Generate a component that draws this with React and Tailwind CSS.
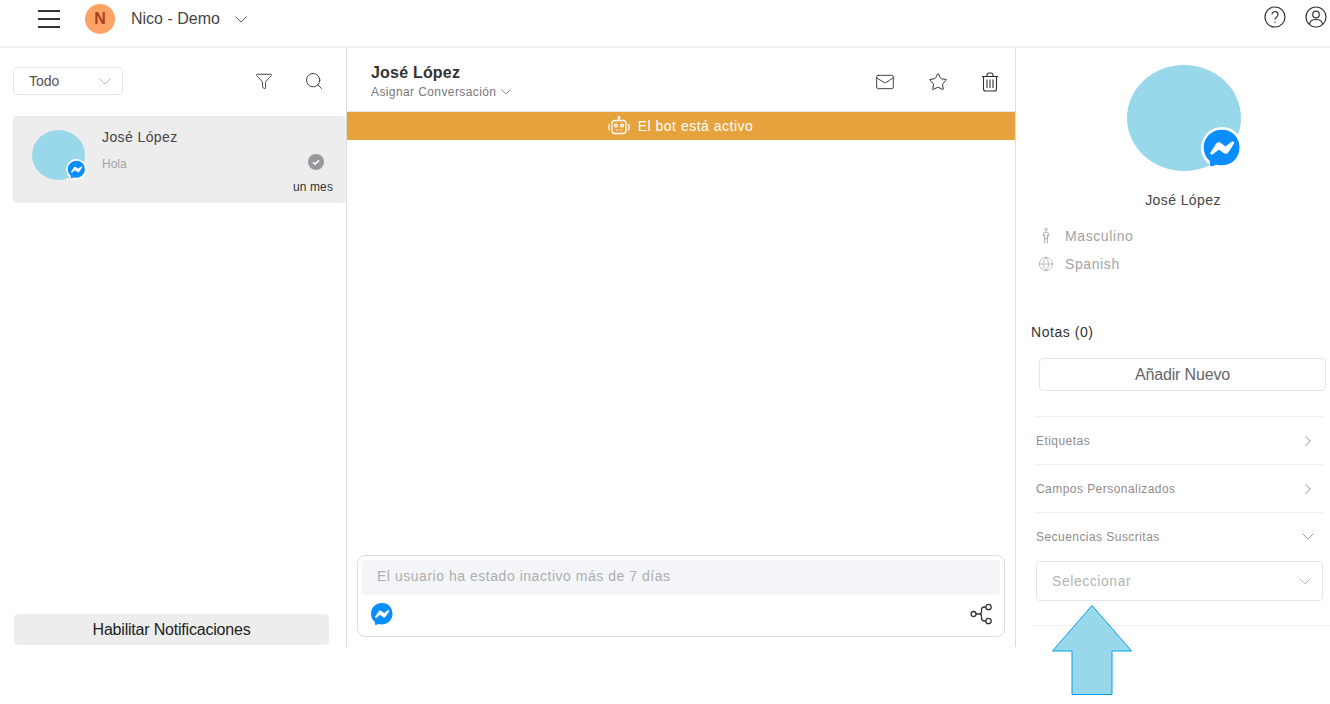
import { ChevronRight, Filter, Search, Mail, Star, Globe } from 'lucide-react';

function MessengerIcon({ className }) {
  return (
    <svg viewBox="0 0 24 24" className={className}>
      <path fill="#0a8dff" d="M12 1C5.8 1 1 5.5 1 11.7c0 3.2 1.3 6 3.5 7.9.4.3.3.6.4 2.6 0 .6.6 1 1.2.8 2.2-1 2.3-1 2.6-1 6.400 1.800 13.800-2.300 13.800-10.300C22.500 5.500 18.200 1 12 1z" />
      <path fill="#fff" stroke="#fff" strokeWidth=".8" d="M5.500 14.800l3.300-5.100c.5-.8 1.600-1 2.300-.4l2.600 1.900c.2.200.6.200.8 0l3.500-2.700c.5-.4 1.100.2.800.7l-3.300 5.100c-.5.800-1.600 1-2.300.4l-2.600-1.900c-.2-.2-.6-.2-.8 0l-3.500 2.700c-.5.400-1.100-.2-.8-.7z" />
    </svg>
  );
}

// wide shallow caret used by the selects and dropdowns
function Caret({ className }) {
  return (
    <svg viewBox="0 0 12 7" className={className} fill="none" stroke="currentColor" strokeWidth="1">
      <path d="M.5.5L6 6l5.500-5.500" />
    </svg>
  );
}

function BotIcon() {
  return (
    <svg viewBox="0 0 24 24" className="w-6 h-6" fill="none" stroke="#fff" strokeWidth="1.300">
      <rect x="5" y="6.500" width="14" height="13" rx="3" />
      <path d="M12 6.500V4" />
      <circle cx="12" cy="3.500" r="0.800" />
      <circle cx="9" cy="11.500" r="1.400" />
      <circle cx="15" cy="11.500" r="1.400" />
      <path d="M9 16h.8M11.600 16h.8M14.200 16h.8" />
      <path d="M2.500 10c-1 2-1 4.500 0 6.500M21.500 10c1 2 1 4.500 0 6.500" />
    </svg>
  );
}

function TrashIcon() {
  return (
    <svg viewBox="0 0 18 20" className="w-[18px] h-5" fill="none" stroke="#333" strokeWidth="1.100">
      <path d="M1 4.500h16" />
      <path d="M6 4.500V3a2 2 0 0 1 2-2h2a2 2 0 0 1 2 2v1.500" />
      <path d="M2.500 4.500V17a2 2 0 0 0 2 2h9a2 2 0 0 0 2-2V4.500" />
      <path d="M6 7.500v8.500M9 7.500v8.500M12 7.500v8.500" />
    </svg>
  );
}

function ShareIcon() {
  return (
    <svg viewBox="0 0 24 24" className="w-6 h-6" fill="none" stroke="#333" strokeWidth="1.300">
      <circle cx="4.500" cy="12" r="2.500" />
      <circle cx="19.500" cy="5" r="2.700" />
      <circle cx="19.500" cy="19" r="2.700" />
      <path d="M7 12h3.500c1.500 0 2-1 2-2.500V8c0-1.800 1-3 3-3h1.300M10.500 12c1.500 0 2 1 2 2.500V16c0 1.800 1 3 3 3h1.300" />
    </svg>
  );
}

function PersonIcon() {
  return (
    <svg viewBox="0 0 16 20" className="w-4 h-[18px]" fill="none" stroke="#a9a4a4" strokeWidth="1">
      <circle cx="8" cy="3" r="1.500" />
      <path d="M5 11V8.500C5 7 5.500 6 7 6h2c1.500 0 2 1 2 2.500V11M6.500 8v10M9.500 8v10M6.500 13h3" />
    </svg>
  );
}

function HelpIcon() {
  return (
    <svg viewBox="0 0 22 22" className="w-[22px] h-[22px]" fill="none" stroke="#333" strokeWidth="1.200">
      <circle cx="11" cy="11" r="10" />
      <path d="M8 8.500a3 3 0 1 1 4.700 2.500c-1 .7-1.700 1.200-1.700 2.500" />
      <path d="M11 15.500v1.300" />
    </svg>
  );
}

function UserIcon() {
  return (
    <svg viewBox="0 0 22 22" className="w-[22px] h-[22px]" fill="none" stroke="#333" strokeWidth="1.200">
      <circle cx="11" cy="11" r="10" />
      <circle cx="11" cy="8.500" r="3.300" />
      <path d="M4.500 18c.5-3 3-4.500 6.500-4.500s6 1.500 6.500 4.500" />
    </svg>
  );
}

function Arrow() {
  return (
    <svg viewBox="0 0 80 90" className="absolute left-[1052px] top-[605px] w-20 h-[90px]">
      <path d="M40 .5L79.500 46H60V89.500H20V46H.5z" fill="#99d8ea" stroke="#00a2e8" strokeWidth="1" />
    </svg>
  );
}

function SideRow({ label, open }) {
  return (
    <div className="h-12 ml-5 mr-[7px] border-t border-[#eeeef3] flex items-center justify-between pr-[6px] text-xs tracking-[.45px] text-[#8f8b8b]">
      <span>{label}</span>
      {open ? (
        <Caret className="mr-[3px] w-3 h-[7px] text-[#9a9a9a]" />
      ) : (
        <ChevronRight className="w-[18px] h-[18px] text-[#777]" strokeWidth={1.100} />
      )}
    </div>
  );
}

export default function App() {
  return (
    <div className="relative w-[1330px] h-[704px] overflow-hidden bg-white font-['Liberation_Sans',sans-serif] text-[#333]">
      {/* Top bar */}
      <header className="h-[48px] border-b-2 border-[#efefef] flex items-center pl-[38px] pr-[3px]">
        <div className="w-[22px] flex flex-col gap-[6px] mb-2">
          <span className="h-[2px] bg-[#333]" />
          <span className="h-[2px] bg-[#333]" />
          <span className="h-[2px] bg-[#333]" />
        </div>
        <div className="ml-[25px] mb-2 w-[30px] h-[30px] rounded-full bg-[#ffa266] text-[#a8431c] font-bold text-base flex items-center justify-center">N</div>
        <span className="ml-4 mb-2 text-base text-[#444]">Nico - Demo</span>
        <Caret className="ml-[15px] mb-2 w-3 h-[7px] text-[#555]" />
        <div className="ml-auto flex gap-[19px] mb-3">
          <HelpIcon />
          <UserIcon />
        </div>
      </header>

      <div className="flex h-[599px]">
        {/* Conversation list */}
        <aside className="w-[347px] border-r border-[#dcdcdc] flex flex-col pl-[13px]">
          <div className="h-[68px] pb-[2px] flex items-center pr-[22px]">
            <div className="w-[110px] h-7 rounded border border-[#e6e6e6] flex items-center justify-between pl-[15px] pr-[11px] text-sm text-[#555]">
              <span>Todo</span>
              <Caret className="w-3 h-[7px] text-[#bbb]" />
            </div>
            <Filter className="ml-auto w-[18px] h-[18px]" strokeWidth={1.200} />
            <Search className="ml-[31px] w-5 h-5" strokeWidth={1.100} />
          </div>
          <div className="h-[87px] rounded bg-[#ededed] flex pl-[19px] pr-3">
            <div className="relative w-[53px] h-[50px] mt-[14px] rounded-[50%] bg-[#99d8ea]">
              <div className="absolute -right-[2px] bottom-0 w-[21px] h-[21px] rounded-full bg-white flex items-center justify-center">
                <MessengerIcon className="w-[19px] h-[19px]" />
              </div>
            </div>
            <div className="ml-[17px] pt-[12px]">
              <div className="text-sm tracking-[.4px] leading-[18px] text-[#444]">José López</div>
              <div className="mt-[9px] text-xs leading-[18px] text-[#a3a3a3]">Hola</div>
            </div>
            <div className="ml-auto flex flex-col items-end pt-[38px]">
              <div className="mr-[10px] w-4 h-4 rounded-full bg-[#99979c] flex items-center justify-center">
                <svg viewBox="0 0 10 10" className="w-[10px] h-[10px]" fill="none" stroke="#fff" strokeWidth="1.600">
                  <path d="M2 5.200l2 2 4-4" />
                </svg>
              </div>
              <div className="mt-2 mr-px text-xs tracking-[.1px] leading-[18px] text-[#333]">un mes</div>
            </div>
          </div>
          <div className="mt-auto mb-[2px] ml-px w-[315px] h-[31px] rounded bg-[#ededed] flex items-center justify-center text-base tracking-[-.2px] text-[#222]">
            Habilitar Notificaciones
          </div>
        </aside>

        {/* Chat */}
        <main className="w-[669px] border-r border-[#dcdcdc] flex flex-col">
          <div className="h-[64px] border-b border-[#e6e6e6] flex items-center pl-6 pr-[16px]">
            <div className="mt-[5px]">
              <div className="text-base tracking-[.2px] leading-[20px] font-bold text-[#333]">José López</div>
              <div className="flex items-center gap-[5px] text-xs tracking-[.4px] leading-[18px] text-[#777]">
                Asignar Conversación
                <Caret className="w-[10px] h-[6px]" />
              </div>
            </div>
            <div className="ml-auto mt-1 flex items-center gap-[33px]">
              <Mail className="w-5 h-5" strokeWidth={1.100} />
              <Star className="w-5 h-5" strokeWidth={1.200} />
              <TrashIcon />
            </div>
          </div>
          <div className="h-7 bg-[#e6a23c] flex items-center justify-center gap-[7px] text-sm tracking-[.5px] text-white">
            <BotIcon />
            <span className="pr-[2px]">El bot está activo</span>
          </div>
          <div className="flex-1" />
          <div className="mx-[10px] mb-[10px] h-[82px] rounded-lg border border-[#dcdcdc] px-1 pt-1">
            <div className="h-[35px] pb-[3px] rounded bg-[#f4f5f9] flex items-center pl-[15px] text-sm tracking-[.53px] text-[#adadad]">
              El usuario ha estado inactivo más de 7 días
            </div>
            <div className="flex items-center justify-between pl-2 pr-[7px] mt-[7px]">
              <MessengerIcon className="w-6 h-6" />
              <ShareIcon />
            </div>
          </div>
        </main>

        {/* Contact details */}
        <aside className="w-[314px] flex flex-col">
          <div className="relative self-start ml-[111px] mt-[17px] w-[114px] h-[106px] rounded-[50%] bg-[#99d8ea]">
            <div className="absolute -right-[2px] bottom-[2px] w-[42px] h-[42px] rounded-full bg-white flex items-center justify-center">
              <MessengerIcon className="w-10 h-10" />
            </div>
          </div>
          <div className="mt-[19px] ml-5 text-center text-sm tracking-[.4px] leading-[20px] text-[#444]">José López</div>
          <div className="mt-[16px] ml-[22px] flex items-center gap-[11px] text-sm tracking-[.6px] leading-5 text-[#a3a3a3]">
            <PersonIcon />
            <span>Masculino</span>
          </div>
          <div className="mt-2 ml-[22px] flex items-center gap-[11px] text-sm tracking-[.6px] leading-5 text-[#a3a3a3]">
            <Globe className="w-4 h-4" strokeWidth={1} />
            <span>Spanish</span>
          </div>
          <div className="mt-[48px] ml-[15px] text-sm tracking-[.55px] leading-5 text-[#333]">Notas (0)</div>
          <div className="mt-4 ml-[23px] mr-1 h-[33px] rounded border border-[#e4e4e4] flex items-center justify-center text-base tracking-[-.15px] text-[#666]">
            Añadir Nuevo
          </div>
          <div className="mt-[25px]">
            <SideRow label="Etiquetas" />
            <SideRow label="Campos Personalizados" />
            <SideRow label="Secuencias Suscritas" open />
          </div>
          <div className="mt-px ml-5 mr-[7px] h-10 rounded border border-[#e4e4e4] flex items-center justify-between pl-[15px] pr-[11px] text-sm tracking-[.55px] text-[#b3b3b3]">
            <span>Seleccionar</span>
            <Caret className="w-3 h-[7px] text-[#bbb]" />
          </div>
          <div className="mt-6 ml-[15px] border-t border-[#eeeeee]" />
        </aside>
      </div>

      <Arrow />
    </div>
  );
}
